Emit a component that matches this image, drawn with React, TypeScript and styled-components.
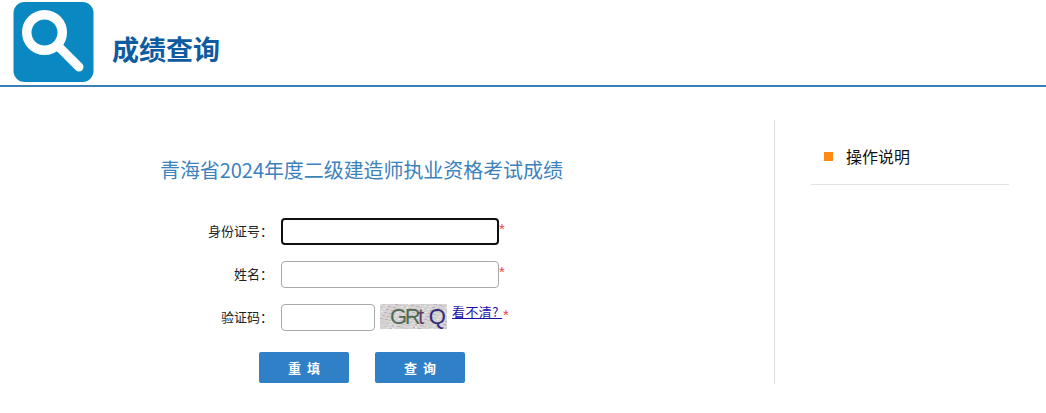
import React from "react";
import styled, { createGlobalStyle } from "styled-components";

const Global = createGlobalStyle`
  html, body { margin: 0; padding: 0; background: #fff; }
  body { font-family: "Liberation Sans", "Noto Sans CJK SC", sans-serif; overflow: hidden; }
`;

const Header = styled.header`
  height: 83px;
  border-bottom: 2px solid #3a7fb5;
  display: flex;
  padding: 2px 0 0 13px;
`;
const LogoWrap = styled.div`
  width: 81px;
  height: 80px;
  flex: none;
`;
const Title = styled.h1`
  margin: 30px 0 0 18px;
  font-size: 27px;
  line-height: 34px;
  font-weight: 700;
  color: #0e5c9f;
  font-family: "Noto Sans CJK SC", sans-serif;
  white-space: nowrap;
`;
const Body = styled.main`
  display: flex;
  margin-top: 33px;
`;
const Left = styled.section`
  width: 775px;
  height: 264px;
  border-right: 1px solid #ddd;
  flex: none;
  padding-top: 35px;
  box-sizing: border-box;
`;
const Heading = styled.h2`
  margin: 0 0 33px 160px;
  font-size: 20px;
  line-height: 30px;
  font-weight: 400;
  color: #3c82bd;
  font-family: "Noto Sans CJK SC", sans-serif;
  letter-spacing: -0.07px;
  white-space: nowrap;
`;
const Form = styled.form`
  display: grid;
  grid-template-columns: 273px auto;
  row-gap: 16px;
  margin: 0;
`;
const Label = styled.label`
  font-size: 13px;
  color: #222;
  text-align: right;
  line-height: 25px;
  height: 27px;
  font-family: "Noto Sans CJK SC", sans-serif;
`;
const Field = styled.div`
  display: flex;
  padding-left: 8px;
  height: 27px;
`;
const Input = styled.input<{ $w: number; $focus?: boolean }>`
  width: ${(p) => p.$w}px;
  height: 27px;
  box-sizing: border-box;
  border: ${(p) => (p.$focus ? "2px solid #101010" : "1px solid #a9a9a9")};
  border-radius: 4px;
  background: #fff;
  padding: 0;
  outline: none;
`;
const Star = styled.span`
  color: #e8474c;
  font-size: 15px;
  line-height: 21px;
  height: 21px;
`;
const CaptchaBox = styled.div`
  position: relative;
  width: 67px;
  height: 25px;
  margin-left: 5px;
  background: #d6d2d6;
  overflow: hidden;
  flex: none;
`;
const CaptchaText = styled.span`
  position: absolute;
  left: 10px;
  top: 0;
  font-size: 22px;
  line-height: 25px;
  letter-spacing: -2.5px;
  white-space: nowrap;
  font-family: "Liberation Sans", sans-serif;
`;
const Cap = styled.span<{ $c: string; $ml?: number }>`
  color: ${(p) => p.$c};
  margin-left: ${(p) => p.$ml ?? 0}px;
`;
const Link = styled.a`
  margin-left: 5px;
  font-size: 13px;
  line-height: 16px;
  height: 18px;
  color: #1a0dab;
  text-decoration: underline;
  white-space: pre;
  letter-spacing: 0.4px;
  font-family: "Noto Sans CJK SC", sans-serif;
`;
const LinkStar = styled(Star)`
  margin-left: 1px;
  line-height: 22px;
`;
const Buttons = styled.div`
  display: flex;
  gap: 26px;
  margin: 21px 0 0 259px;
`;
const Btn = styled.button`
  width: 90px;
  height: 31px;
  border: 0;
  border-radius: 2px;
  background: #3080c8;
  color: #fff;
  font-size: 13px;
  font-weight: 700;
  letter-spacing: 6px;
  padding: 0 0 0 6px;
  font-family: "Noto Sans CJK SC", sans-serif;
`;
const Right = styled.aside`
  width: 198px;
  margin-left: 36px;
  flex: none;
`;
const SideItem = styled.div`
  height: 65px;
  border-bottom: 1px solid #e2e2e2;
  display: flex;
  align-items: center;
  padding: 8px 0 0 13px;
  box-sizing: border-box;
  gap: 13px;
  font-size: 16px;
  color: #111;
  font-family: "Noto Sans CJK SC", sans-serif;
`;
const Bullet = styled.span`
  width: 9px;
  height: 9px;
  background: #fd8a12;
  flex: none;
`;

const Logo = () => (
  <svg width="81" height="80" viewBox="0 0 81 80">
    <rect x="0.5" width="80" height="80" rx="11" fill="#0a88c2" />
    <circle cx="31.5" cy="30.5" r="17.75" fill="none" stroke="#fff" strokeWidth="9.5" />
    <line x1="46" y1="45" x2="66" y2="65" stroke="#fff" strokeWidth="9" strokeLinecap="round" />
  </svg>
);

const Noise = () => (
  <svg width="67" height="25" viewBox="0 0 67 25" style={{ position: "absolute", left: 0, top: 0 }}>
    {Array.from({ length: 150 }, (_, i) => (
      <rect
        key={i}
        x={(i * 37) % 67}
        y={(i * 17) % 25}
        width={2 + (i % 3)}
        height="1"
        fill={i % 3 === 0 ? "#ecebe8" : i % 3 === 1 ? "#b8b4bc" : "#c8cbc0"}
      />
    ))}
  </svg>
);

export default function App() {
  return (
    <>
      <Global />
      <Header>
        <LogoWrap>
          <Logo />
        </LogoWrap>
        <Title>成绩查询</Title>
      </Header>
      <Body>
        <Left>
          <Heading>青海省2024年度二级建造师执业资格考试成绩</Heading>
          <Form>
            <Label>身份证号：</Label>
            <Field>
              <Input $w={218} $focus />
              <Star>*</Star>
            </Field>
            <Label>姓名：</Label>
            <Field>
              <Input $w={218} />
              <Star>*</Star>
            </Field>
            <Label>验证码：</Label>
            <Field>
              <Input $w={94} />
              <CaptchaBox>
                <Noise />
                <CaptchaText>
                  <Cap $c="#4f6b52">G</Cap>
                  <Cap $c="#4f6b52">R</Cap>
                  <Cap $c="#6b3f63">t</Cap>
                  <Cap $c="#2f2a7a" $ml={7}>Q</Cap>
                </CaptchaText>
              </CaptchaBox>
              <Link href="#">看不清? </Link>
              <LinkStar>*</LinkStar>
            </Field>
          </Form>
          <Buttons>
            <Btn type="button">重填</Btn>
            <Btn type="button">查询</Btn>
          </Buttons>
        </Left>
        <Right>
          <SideItem>
            <Bullet />
            操作说明
          </SideItem>
        </Right>
      </Body>
    </>
  );
}
